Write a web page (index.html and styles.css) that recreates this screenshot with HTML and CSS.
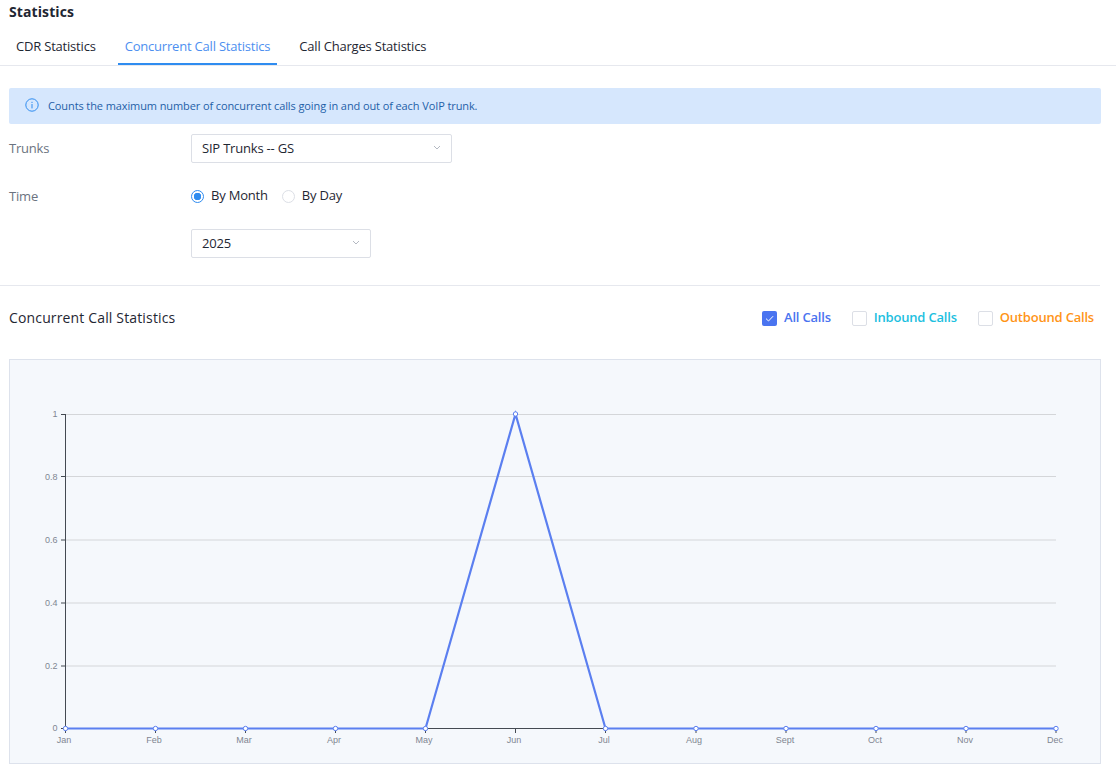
FILE: index.html
```html
<!DOCTYPE html>
<html lang="en">
<head>
    <meta charset="UTF-8">
    <meta name="viewport" content="width=device-width, initial-scale=1.0">
    <title>Statistics</title>
    <link rel="stylesheet" href="styles.css">
</head>
<body>
    <h1 class="page-title">Statistics</h1>

    <!-- Tabs -->
    <nav class="tabs">
        <a class="tab" href="#cdr">CDR Statistics</a>
        <a class="tab active" href="#concurrent">Concurrent Call Statistics</a>
        <a class="tab" href="#charges">Call Charges Statistics</a>
    </nav>

    <div class="alert">
        <svg class="alert-icon" viewBox="0 0 14 14" width="14" height="14">
            <circle cx="7" cy="7" r="6.2" fill="none" stroke="#2f8cf0" stroke-width="1"/>
            <rect x="6.5" y="6" width="1" height="4.4" fill="#2f8cf0"/>
            <rect x="6.5" y="3.8" width="1" height="1.2" fill="#2f8cf0"/>
        </svg>
        <span>Counts the maximum number of concurrent calls going in and out of each VoIP trunk.</span>
    </div>

    <!-- Filter form -->
    <div class="form-row row-trunks">
        <label class="form-label">Trunks</label>
        <div class="select select-wide">
            <span>SIP Trunks -- GS</span>
            <svg class="chevron" viewBox="0 0 8 5" width="8" height="5"><path d="M1 1l3 3 3-3" fill="none" stroke="#b4b9c2" stroke-width="1"/></svg>
        </div>
    </div>
    <div class="form-row row-time">
        <label class="form-label">Time</label>
        <div class="radios">
            <span class="radio checked"></span><span class="radio-text">By Month</span>
            <span class="radio"></span><span class="radio-text">By Day</span>
        </div>
    </div>
    <div class="form-row row-year">
        <span class="form-label"></span>
        <div class="select select-narrow">
            <span>2025</span>
            <svg class="chevron" viewBox="0 0 8 5" width="8" height="5"><path d="M1 1l3 3 3-3" fill="none" stroke="#b4b9c2" stroke-width="1"/></svg>
        </div>
    </div>

    <hr class="divider">

    <div class="chart-head">
        <h2 class="chart-title">Concurrent Call Statistics</h2>
        <div class="legend">
            <span class="check checked">
                <svg viewBox="0 0 15 15" width="15" height="15"><path d="M4 7.6l2.5 2.4 4.6-4.8" fill="none" stroke="#fff" stroke-width="1"/></svg>
            </span>
            <span class="legend-text all">All Calls</span>
            <span class="check"></span>
            <span class="legend-text inbound">Inbound Calls</span>
            <span class="check"></span>
            <span class="legend-text outbound">Outbound Calls</span>
        </div>
    </div>

    <!-- Chart, drawn in page coordinates -->
    <div class="chart-box">
        <svg class="chart" viewBox="10 360 1090 403" width="1090" height="403">
            <g class="grid">
                <path d="M65 414.500H1056"/>
                <path d="M65 476.500H1056"/>
                <path d="M65 540H1056"/>
                <path d="M65 603H1056"/>
                <path d="M65 666H1056"/>
            </g>
            <g class="axis">
                <path d="M65.500 414V728.500H1056"/>
                <path d="M61 414.500H65M61 476.500H65M61 540H65M61 603H65M61 666H65M61 728.500H65"/>
                <path d="M65.500 728V733M155.500 728V733M245.500 728V733M335.500 728V733M425.500 728V733M515.500 728V733M605.500 728V733M696 728V733M786 728V733M876 728V733M966 728V733M1056 728V733"/>
            </g>
            <g class="y-labels">
                <text x="57.500" y="416.500">1</text>
                <text x="57.500" y="479.500">0.8</text>
                <text x="57.500" y="542.500">0.6</text>
                <text x="57.500" y="605.500">0.4</text>
                <text x="57.500" y="668.500">0.2</text>
                <text x="57.500" y="731">0</text>
            </g>
            <g class="x-labels">
                <text x="64" y="743">Jan</text>
                <text x="154" y="743">Feb</text>
                <text x="244" y="743">Mar</text>
                <text x="334" y="743">Apr</text>
                <text x="424" y="743">May</text>
                <text x="514" y="743">Jun</text>
                <text x="604" y="743">Jul</text>
                <text x="694" y="743">Aug</text>
                <text x="785" y="743">Sept</text>
                <text x="875" y="743">Oct</text>
                <text x="965" y="743">Nov</text>
                <text x="1055" y="743">Dec</text>
            </g>
            <polyline class="line" points="65.500,728.500 155.500,728.500 245.500,728.500 335.500,728.500 425.500,728.500 515.500,414 605.500,728.500 696,728.500 786,728.500 876,728.500 966,728.500 1056,728.500"/>
            <g class="dots">
                <circle cx="65.500" cy="728.500" r="2.200"/>
                <circle cx="155.500" cy="728.500" r="2.200"/>
                <circle cx="245.500" cy="728.500" r="2.200"/>
                <circle cx="335.500" cy="728.500" r="2.200"/>
                <circle cx="425.500" cy="728.500" r="2.200"/>
                <circle cx="515.500" cy="414" r="2.200"/>
                <circle cx="605.500" cy="728.500" r="2.200"/>
                <circle cx="696" cy="728.500" r="2.200"/>
                <circle cx="786" cy="728.500" r="2.200"/>
                <circle cx="876" cy="728.500" r="2.200"/>
                <circle cx="966" cy="728.500" r="2.200"/>
                <circle cx="1056" cy="728.500" r="2.200"/>
            </g>
        </svg>
    </div>
</body>
</html>
```

FILE: styles.css
```css
body {
    margin: 0;
    height: 777px;
    overflow: hidden;
    background: #fff;
    color: #1f2733;
    font-family: "Open Sans", sans-serif;
    font-size: 13px;
    letter-spacing: -0.2px;
}

.page-title {
    margin: 0;
    padding: 3px 0 0 9px;
    height: 23px;
    font-size: 14px;
    line-height: 18px;
    font-weight: 700;
    letter-spacing: 0.1px;
}

.tabs {
    display: flex;
    height: 39px;
    padding-left: 9px;
    border-bottom: 1px solid #e6e8ee;
}

.tab {
    padding: 11px 7px 0;
    margin-right: 15px;
    line-height: 18px;
    color: #1f2733;
    text-decoration: none;
}

.tab.active {
    color: #4d8ff0;
    border-bottom: 2px solid #2f8cf0;
}

.alert {
    display: flex;
    align-items: center;
    gap: 9px;
    height: 36px;
    margin: 22px 15px 0 9px;
    padding: 0 0 2px 16px;
    box-sizing: border-box;
    background: #d6e7fd;
    border-radius: 2px;
    color: #1f5fa8;
    font-size: 11px;
    letter-spacing: -0.1px;
}

.form-row {
    display: flex;
    align-items: center;
    padding-left: 9px;
}

.form-label {
    width: 182px;
    flex-shrink: 0;
    padding-bottom: 2px;
    color: #6b7380;
}

.row-trunks {
    margin-top: 10px;
}

.row-time {
    margin-top: 24px;
    height: 18px;
}

.row-time .form-label {
    padding-bottom: 0;
}

.row-year {
    margin-top: 24px;
}

.select {
    display: flex;
    align-items: center;
    justify-content: space-between;
    height: 29px;
    box-sizing: border-box;
    padding: 0 10px 2px 10px;
    background: #fff;
    border: 1px solid #dcdfe6;
    border-radius: 2px;
}

.select-wide {
    width: 261px;
}

.select-narrow {
    width: 180px;
}

.radios {
    display: flex;
    align-items: center;
}

.radio {
    width: 13px;
    height: 13px;
    box-sizing: border-box;
    border: 1px solid #dcdfe6;
    border-radius: 50%;
}

.radio.checked {
    border: 1px solid #2f8cf0;
    background: radial-gradient(circle, #2f8cf0 0 3.5px, #fff 4px);
}

.radio-text {
    margin: 0 14px 2px 7px;
}

.divider {
    margin: 27px 16px 0 0;
    border: 0;
    border-top: 1px solid #e6e8ee;
}

.chart-head {
    display: flex;
    align-items: center;
    justify-content: space-between;
    height: 20px;
    margin-top: 22px;
    padding: 0 22px 0 9px;
}

.chart-title {
    margin: 0 0 2px;
    font-size: 14px;
    font-weight: 400;
    letter-spacing: 0.15px;
}

.legend {
    display: flex;
    align-items: center;
    font-weight: 600;
    font-size: 13px;
    letter-spacing: -0.2px;
}

.check {
    display: block;
    width: 15px;
    height: 15px;
    box-sizing: border-box;
    margin-right: 7px;
    border: 1px solid #dcdfe6;
    border-radius: 2px;
}

.check svg {
    display: block;
}

.check.checked {
    border: 0;
    background: #4a74f0;
}

.legend-text {
    margin: 0 21px 2px 0;
}

.legend-text.all {
    color: #4a74f0;
}

.legend-text.inbound {
    color: #1cc0e0;
}

.legend-text.outbound {
    color: #ff9417;
    margin-right: 0;
}

.chart-box {
    width: 1090px;
    height: 403px;
    margin: 31px 0 0 9px;
    background: #f5f8fc;
    border: 1px solid #dde2ec;
}

.chart {
    display: block;
}

.grid path {
    fill: none;
    stroke: #d4d6d9;
    stroke-width: 1;
}

.axis path {
    fill: none;
    stroke: #444a52;
    stroke-width: 1;
}

.y-labels text,
.x-labels text {
    font-family: "Liberation Sans", sans-serif;
    font-size: 9px;
    letter-spacing: 0;
    fill: #7f8692;
}

.y-labels text {
    text-anchor: end;
}

.x-labels text {
    text-anchor: middle;
}

.line {
    fill: none;
    stroke: #5b7ff0;
    stroke-width: 2.2;
}

.dots circle {
    fill: #fff;
    stroke: #5b7ff0;
    stroke-width: 1;
}
```
